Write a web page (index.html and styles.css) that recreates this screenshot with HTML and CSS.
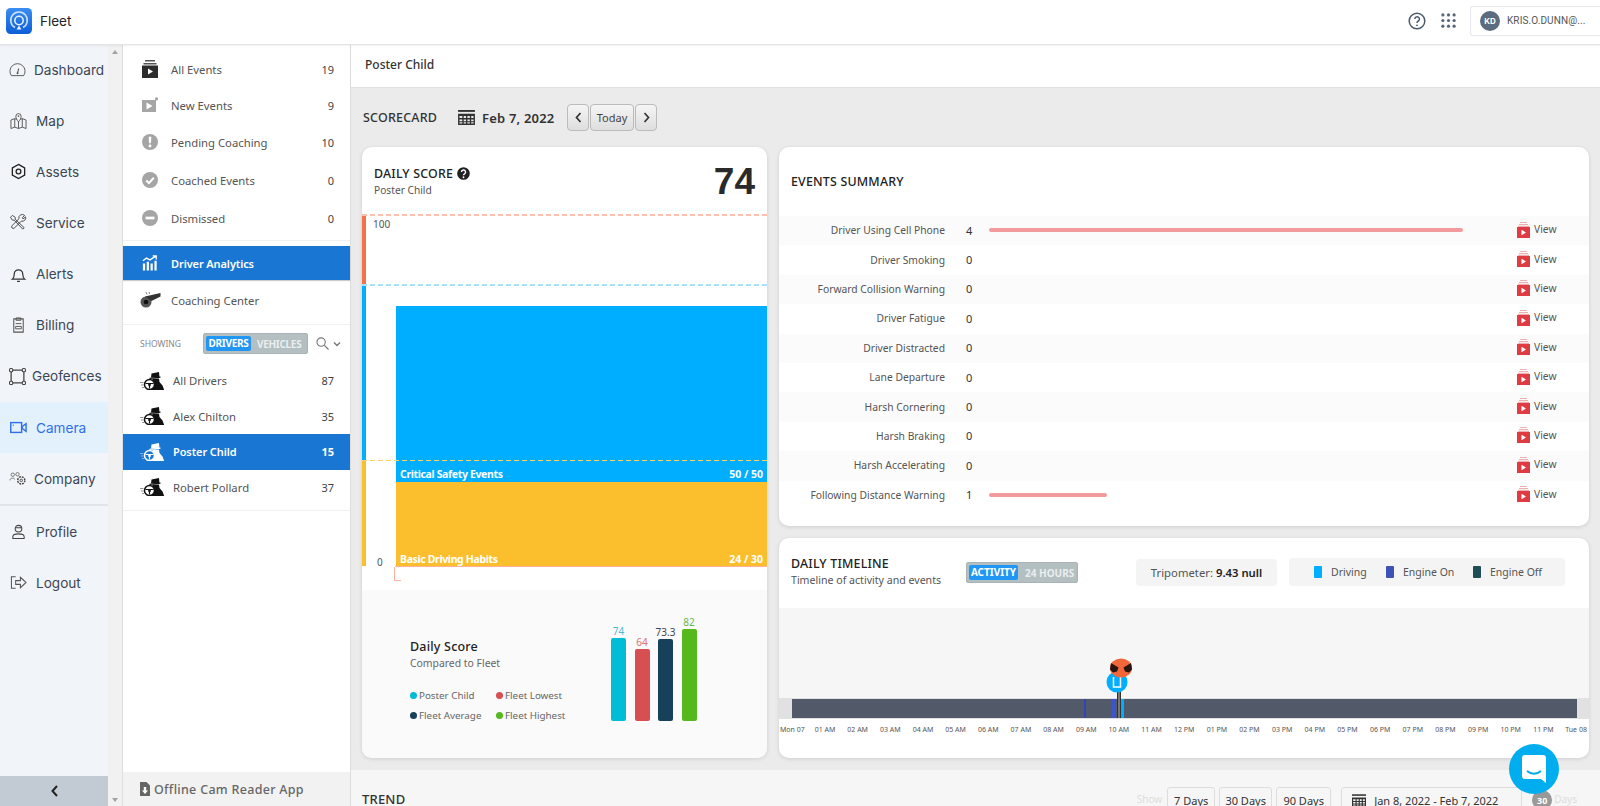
FILE: index.html
```html
<!DOCTYPE html>
<html lang="en">
<head>
<meta charset="utf-8">
<title>Fleet</title>
<link rel="stylesheet" href="styles.css">
</head>
<body>
<svg class="defs" width="0" height="0">
  <symbol id="i-driver" viewBox="0 0 24 18">
    <path d="M11.500 1.500L19 0l.5 5.500H11z" fill="currentColor"/>
    <path d="M9.500 5.800l11-1.300v1.300l-11 1.200z" fill="currentColor"/>
    <path d="M12.500 6.500h6.500l.5 3.500 3 3.500 1.500 4v.5H11z" fill="currentColor"/>
    <circle cx="9.500" cy="12.500" r="5" fill="var(--wheel,#fff)" stroke="currentColor" stroke-width="1.500"/>
    <circle cx="9.500" cy="12.800" r="1.400" fill="currentColor"/>
    <path d="M5.500 11.500h8M9.500 13v3.500" stroke="currentColor" stroke-width="1.200"/>
    <path d="M0 10.500h3.500M1 13h2.500M2 15.500h2" stroke="currentColor" stroke-width="1" opacity=".45"/>
  </symbol>
  <symbol id="i-view" viewBox="0 0 13 16">
    <path d="M3 0h7v1H3zM2 2h9v1H2zM1 3.800h11v1.200H1z" fill="#eab0b2"/>
    <rect y="5" width="13" height="11" fill="#de3c42"/>
    <path d="M4.500 7.800l4.500 2.700-4.500 2.700z" fill="#fff"/>
  </symbol>
  <symbol id="i-cal" viewBox="0 0 18 16">
    <path d="M0 0h18v2H0z" fill="#333"/>
    <path d="M0 4h18v12H0zM1.500 6.500v2h3v-2zM6 6.500v2h2.500v-2zM10 6.500v2h2.500v-2zM14 6.500v2h2.500v-2zM1.500 10v2h3v-2zM6 10v2h2.500v-2zM10 10v2h2.500v-2zM14 10v2h2.500v-2zM1.500 13v1.500h3V13zM6 13v1.500h2.500V13zM10 13v1.500h2.500V13zM14 13v1.500h2.500V13z" fill="#333" fill-rule="evenodd"/>
  </symbol>
</svg>

<header class="topbar">
  <div class="brand">
    <svg class="logo" viewBox="0 0 26 26">
      <defs><linearGradient id="lg" x1="0" y1="0" x2="0" y2="1"><stop offset="0" stop-color="#3b8df0"/><stop offset="1" stop-color="#0b5ed7"/></linearGradient></defs>
      <rect width="26" height="26" rx="4.500" fill="url(#lg)"/>
      <path d="M9 19.500a8.300 8.300 0 1 1 8 0" fill="none" stroke="#cfe3fb" stroke-width="1.500"/>
      <circle cx="13" cy="12.500" r="4.200" fill="none" stroke="#e6f1fe" stroke-width="1.600"/>
      <path d="M13 17.500l2.500 4h-5z" fill="#e6f1fe"/>
    </svg>
    <span class="brand-name">Fleet</span>
  </div>
  <div class="top-actions">
    <svg class="top-help" viewBox="0 0 18 18"><circle cx="9" cy="9" r="7.800" fill="none" stroke="#4b5b6e" stroke-width="1.500"/><path d="M6.800 7a2.300 2.300 0 1 1 3.500 2c-.9.500-1.300 1-1.300 2" fill="none" stroke="#4b5b6e" stroke-width="1.500"/><circle cx="9" cy="13.300" r=".9" fill="#4b5b6e"/></svg>
    <svg class="top-grid" viewBox="0 0 16 16" fill="#55657a"><circle cx="2" cy="2" r="1.700"/><circle cx="8" cy="2" r="1.700"/><circle cx="14" cy="2" r="1.700"/><circle cx="2" cy="8" r="1.700"/><circle cx="8" cy="8" r="1.700"/><circle cx="14" cy="8" r="1.700"/><circle cx="2" cy="14" r="1.700"/><circle cx="8" cy="14" r="1.700"/><circle cx="14" cy="14" r="1.700"/></svg>
    <div class="user-box"><span class="avatar">KD</span><span class="user-name">KRIS.O.DUNN@...</span></div>
  </div>
</header>

<div class="app">
  <nav class="nav">
    <div class="nav-list nav-list-top">
      <a class="nav-item"><svg class="nav-ic nav-ic-gauge" viewBox="0 0 18 16"><path d="M2.500 14.500a8 8 0 1 1 13 0z" fill="none" stroke="#555" stroke-width="1"/><path d="M9 12l1.200-5" stroke="#555" stroke-width="1.200"/><circle cx="9" cy="12" r="1" fill="#555"/></svg><span class="nav-label-tight">Dashboard</span></a>
      <a class="nav-item"><svg class="nav-ic" viewBox="0 0 18 18"><path d="M1 8.500l4-1.500v9l-4 1.500zM5 7l2 .8M11 7.800l2-.8 4 1.500v9l-4-1.500-4 1.500-4-1.500M13 7v9M9 10v7.500" fill="none" stroke="#555" stroke-width="1"/><path d="M9 10.500C7.500 8.500 6.200 6.800 6.200 4.500a2.800 2.800 0 0 1 5.600 0c0 2.300-1.300 4-2.800 6z" fill="none" stroke="#555"/><circle cx="9" cy="4.300" r=".9" fill="#555"/></svg><span>Map</span></a>
      <a class="nav-item"><svg class="nav-ic" viewBox="0 0 18 18"><path d="M9 1.500l6.500 3.700v7.600L9 16.500l-6.500-3.700V5.200z" fill="none" stroke="#222" stroke-width="1.400"/><circle cx="9" cy="9" r="2.500" fill="none" stroke="#222" stroke-width="1.400"/></svg><span>Assets</span></a>
      <a class="nav-item"><svg class="nav-ic" viewBox="0 0 18 18"><path d="M2.500 1.500l3 2v2l9.500 9-1.500 1.500-9-9.500h-2l-2-3zM15.500 1.500l-2.500 2.500.8 1.200 2.700-2.200a3.600 3.600 0 0 1-4.500 4.500L4.500 15a1.800 1.800 0 0 1-2.500-2.500L9.500 5a3.600 3.600 0 0 1 6-3.500z" fill="none" stroke="#444" stroke-width="1"/></svg><span>Service</span></a>
      <a class="nav-item"><svg class="nav-ic" viewBox="0 0 18 18"><path d="M2.500 14c1.300-1 2-2.500 2-5.500a4.500 4.500 0 0 1 9 0c0 3 .7 4.500 2 5.500z" fill="none" stroke="#333" stroke-width="1.300"/><path d="M7.500 16.300h3" stroke="#333" stroke-width="1.300"/></svg><span>Alerts</span></a>
      <a class="nav-item"><svg class="nav-ic" viewBox="0 0 18 18"><path d="M4 2h10v14H4z" fill="none" stroke="#555" stroke-width="1.100"/><path d="M6.500 1h5v2.500h-5zM6 7h6M6 10h6v2.500H6z" fill="none" stroke="#555"/></svg><span>Billing</span></a>
      <a class="nav-item nav-item-geo"><svg class="nav-ic" viewBox="0 0 16 16"><path d="M2 2h12v12H2z" fill="none" stroke="#444" stroke-width="1.200"/><rect x=".5" y=".5" width="3" height="3" rx="1" fill="#f1f5f9" stroke="#444"/><rect x="12.500" y=".5" width="3" height="3" rx="1" fill="#f1f5f9" stroke="#444"/><rect x=".5" y="12.500" width="3" height="3" rx="1" fill="#f1f5f9" stroke="#444"/><rect x="12.500" y="12.500" width="3" height="3" rx="1" fill="#f1f5f9" stroke="#444"/></svg><span>Geofences</span></a>
      <a class="nav-item is-active"><svg class="nav-ic" viewBox="0 0 18 14"><rect x=".8" y="1.800" width="11.500" height="10.400" fill="none" stroke="#2f6fed" stroke-width="1.500"/><path d="M13 6l4-3v8l-4-3z" fill="none" stroke="#2f6fed" stroke-width="1.500"/><circle cx="3.500" cy="4.500" r=".7" fill="#2f6fed"/></svg><span>Camera</span></a>
      <a class="nav-item"><svg class="nav-ic nav-ic-wide" viewBox="0 0 18 14"><circle cx="4" cy="3" r="1.800" fill="none" stroke="#666" stroke-width=".9"/><path d="M1 9c0-3 5-3 5-1" fill="none" stroke="#666" stroke-width=".9"/><circle cx="9" cy="2.500" r="1.800" fill="none" stroke="#666" stroke-width=".9"/><circle cx="13" cy="9" r="3.800" fill="none" stroke="#444" stroke-width="1.500" stroke-dasharray="2 1"/><circle cx="13" cy="9" r="1.300" fill="none" stroke="#444"/></svg><span class="nav-label-tight">Company</span></a>
    </div>
    <div class="nav-divider"></div>
    <div class="nav-list">
      <a class="nav-item"><svg class="nav-ic" viewBox="0 0 18 18"><circle cx="9" cy="6" r="3.500" fill="none" stroke="#444" stroke-width="1.100"/><path d="M5.500 5h7M3 16.500v-2c0-2 2-3 6-3s6 1 6 3v2z" fill="none" stroke="#444" stroke-width="1.100"/></svg><span>Profile</span></a>
      <a class="nav-item"><svg class="nav-ic" viewBox="0 0 18 16"><path d="M6 2H1.500v12H6" fill="none" stroke="#555" stroke-width="1.100"/><path d="M6 6h5V2.500L17 8l-6 5.500V10H6z" fill="none" stroke="#555" stroke-width="1.100"/></svg><span>Logout</span></a>
    </div>
    <div class="nav-collapse"><svg width="7" height="12" viewBox="0 0 7 12"><path d="M6 1L1.500 6 6 11" fill="none" stroke="#222" stroke-width="2"/></svg></div>
  </nav>
  <div class="nav-scroll"><span class="arrow-up"></span><span class="arrow-down"></span></div>

  <aside class="side">
    <ul class="side-list side-events">
      <li class="side-row"><svg class="side-ic" viewBox="0 0 16 18"><path d="M3 0h10v1.500H3zM1.500 3h13v1.500h-13z" fill="#555"/><rect y="5.500" width="16" height="12.500" fill="#2c2c2c"/><path d="M6 8.500l5 3-5 3z" fill="#fff"/></svg><span class="side-name">All Events</span><span class="side-num">19</span></li>
      <li class="side-row"><svg class="side-ic" viewBox="0 0 16 16"><rect y="3" width="14" height="12" fill="#a5a5a5"/><path d="M4.500 5.500l6 3.500-6 3.500z" fill="#fff"/><circle cx="14.500" cy="1.800" r="1.600" fill="#a5a5a5"/></svg><span class="side-name">New Events</span><span class="side-num">9</span></li>
      <li class="side-row side-row-pending"><svg class="side-ic" viewBox="0 0 18 18"><circle cx="9" cy="9" r="9" fill="#a5a5a5"/><path d="M7.500 3h3l-.5 7.500H8z" fill="#fff"/><circle cx="9" cy="13.500" r="1.600" fill="#fff"/></svg><span class="side-name">Pending Coaching</span><span class="side-num">10</span></li>
      <li class="side-row side-row-coached"><svg class="side-ic" viewBox="0 0 18 18"><circle cx="9" cy="9" r="9" fill="#a5a5a5"/><path d="M4.800 9.500l3 3 5.500-6" fill="none" stroke="#fff" stroke-width="2.300"/></svg><span class="side-name">Coached Events</span><span class="side-num">0</span></li>
      <li class="side-row side-row-coached"><svg class="side-ic" viewBox="0 0 18 18"><circle cx="9" cy="9" r="9" fill="#a5a5a5"/><rect x="4" y="7.500" width="10" height="3" fill="#fff"/></svg><span class="side-name">Dismissed</span><span class="side-num">0</span></li>
    </ul>
    <div class="side-tabs">
      <div class="side-row side-row-active side-row-tab"><svg class="side-ic" viewBox="0 0 18 17" fill="#fff"><path d="M1 9h2.500v8H1zM5.300 7h2.500v10H5.300zM9.600 9h2.500v8H9.600zM14 6h2.500v11H14z"/><path d="M1 6l4-3 4 2 6-4M12 .5h4v4" fill="none" stroke="#fff" stroke-width="1.500"/></svg><span class="side-name side-name-strong">Driver Analytics</span></div>
      <div class="side-row side-row-tab"><svg class="side-ic side-ic-whistle" viewBox="0 0 22 16"><circle cx="7" cy="10" r="5.500" fill="#555"/><circle cx="7" cy="10" r="2.300" fill="#111"/><path d="M6 4.600L21.500 1v3.500l-9 4.500z" fill="#333"/><path d="M7 0l1 2.500M10 0l.5 2" stroke="#888"/></svg><span class="side-name">Coaching Center</span></div>
    </div>
    <div class="side-filter">
      <span class="showing">SHOWING</span>
      <div class="switch switch-side"><span class="switch-on">DRIVERS</span><span class="switch-off">VEHICLES</span></div>
      <svg class="filter-search" viewBox="0 0 14 14"><circle cx="5.500" cy="5.500" r="4.500" fill="none" stroke="#777" stroke-width="1.200"/><path d="M9 9l4.500 4.500" stroke="#777" stroke-width="1.300"/></svg>
      <svg class="filter-chev" viewBox="0 0 8 6"><path d="M1 1.500l3 3 3-3" fill="none" stroke="#777" stroke-width="1.400"/></svg>
    </div>
    <ul class="side-list drivers">
      <li class="driver"><svg class="driver-ic"><use href="#i-driver"/></svg><span class="side-name">All Drivers</span><span class="side-num">87</span></li>
      <li class="driver"><svg class="driver-ic"><use href="#i-driver"/></svg><span class="side-name">Alex Chilton</span><span class="side-num">35</span></li>
      <li class="driver driver-active"><svg class="driver-ic"><use href="#i-driver"/></svg><span class="side-name side-name-strong">Poster Child</span><span class="side-num">15</span></li>
      <li class="driver"><svg class="driver-ic"><use href="#i-driver"/></svg><span class="side-name">Robert Pollard</span><span class="side-num">37</span></li>
    </ul>
    <div class="side-footer"><svg class="footer-ic" viewBox="0 0 10 14"><path d="M0 0h6.500L10 3.500V14H0z" fill="#666"/><path d="M3.800 5h2.400v3.500H8L5 12 2 8.500h1.800z" fill="#fff"/></svg><span>Offline Cam Reader App</span></div>
  </aside>

  <main class="main">
    <div class="page-title">Poster Child</div>
    <section class="score-section">
      <div class="score-head">
        <span class="section-label">SCORECARD</span>
        <svg class="cal-ic"><use href="#i-cal"/></svg>
        <span class="score-date">Feb 7, 2022</span>
        <div class="pager">
          <button class="pg pg-arrow"><svg width="7" height="11" viewBox="0 0 7 11"><path d="M5.500 1L1.500 5.500l4 4.500" fill="none" stroke="#333" stroke-width="1.700"/></svg></button>
          <button class="pg pg-today">Today</button>
          <button class="pg pg-arrow"><svg width="7" height="11" viewBox="0 0 7 11"><path d="M1.500 1l4 4.500-4 4.500" fill="none" stroke="#333" stroke-width="1.700"/></svg></button>
        </div>
      </div>
      <div class="score-grid">
        <article class="card score-card">
          <div class="score-top">
            <div>
              <div class="card-title">DAILY SCORE <svg class="q-ic" viewBox="0 0 14 14"><circle cx="7" cy="7" r="6.800" fill="#222"/><path d="M4.800 5.400a2.200 2.200 0 1 1 3.300 1.900c-.8.400-1.100.8-1.100 1.700" fill="none" stroke="#fff" stroke-width="1.500"/><circle cx="7" cy="11" r="1" fill="#fff"/></svg></div>
              <div class="card-sub">Poster Child</div>
            </div>
            <div class="score-big">74</div>
          </div>
          <div class="chart">
            <div class="axis"><span class="axis-red"></span><span class="axis-blue"></span><span class="axis-yellow"></span></div>
            <div class="stack">
              <div class="stack-blue"><span>Critical Safety Events</span><span>50 / 50</span></div>
              <div class="stack-yellow"><span>Basic Driving Habits</span><span>24 / 30</span></div>
            </div>
            <i class="dash dash-red"></i><i class="dash dash-blue"></i><i class="dash dash-yellow"></i>
            <span class="tick-100">100</span><span class="tick-0">0</span>
            <i class="base-line"></i><i class="bracket"></i>
          </div>
          <div class="compare">
            <div class="compare-text">
              <div class="compare-title">Daily Score</div>
              <div class="compare-sub">Compared to Fleet</div>
              <div class="compare-legend">
                <span class="leg"><i class="dot c-teal"></i>Poster Child</span>
                <span class="leg"><i class="dot c-red"></i>Fleet Lowest</span>
                <span class="leg"><i class="dot c-navy"></i>Fleet Average</span>
                <span class="leg"><i class="dot c-green"></i>Fleet Highest</span>
              </div>
            </div>
            <div class="mini-bars">
              <div class="mini"><span class="t-teal">74</span><i class="c-teal" style="height:83px"></i></div>
              <div class="mini"><span class="t-red">64</span><i class="c-red" style="height:72px"></i></div>
              <div class="mini"><span class="t-navy">73.3</span><i class="c-navy" style="height:82px"></i></div>
              <div class="mini"><span class="t-green">82</span><i class="c-green" style="height:92px"></i></div>
            </div>
          </div>
        </article>

        <div class="right-col">
          <article class="card events-card">
            <h2 class="card-title events-title">EVENTS SUMMARY</h2>
            <div class="ev-list">
              <div class="ev-row"><span class="ev-name">Driver Using Cell Phone</span><span class="ev-num">4</span><span class="ev-track"><i class="ev-bar" style="width:474px"></i></span><span class="ev-view"><svg class="view-ic"><use href="#i-view"/></svg>View</span></div>
              <div class="ev-row"><span class="ev-name">Driver Smoking</span><span class="ev-num">0</span><span class="ev-track"></span><span class="ev-view"><svg class="view-ic"><use href="#i-view"/></svg>View</span></div>
              <div class="ev-row"><span class="ev-name">Forward Collision Warning</span><span class="ev-num">0</span><span class="ev-track"></span><span class="ev-view"><svg class="view-ic"><use href="#i-view"/></svg>View</span></div>
              <div class="ev-row"><span class="ev-name">Driver Fatigue</span><span class="ev-num">0</span><span class="ev-track"></span><span class="ev-view"><svg class="view-ic"><use href="#i-view"/></svg>View</span></div>
              <div class="ev-row"><span class="ev-name">Driver Distracted</span><span class="ev-num">0</span><span class="ev-track"></span><span class="ev-view"><svg class="view-ic"><use href="#i-view"/></svg>View</span></div>
              <div class="ev-row"><span class="ev-name">Lane Departure</span><span class="ev-num">0</span><span class="ev-track"></span><span class="ev-view"><svg class="view-ic"><use href="#i-view"/></svg>View</span></div>
              <div class="ev-row"><span class="ev-name">Harsh Cornering</span><span class="ev-num">0</span><span class="ev-track"></span><span class="ev-view"><svg class="view-ic"><use href="#i-view"/></svg>View</span></div>
              <div class="ev-row"><span class="ev-name">Harsh Braking</span><span class="ev-num">0</span><span class="ev-track"></span><span class="ev-view"><svg class="view-ic"><use href="#i-view"/></svg>View</span></div>
              <div class="ev-row"><span class="ev-name">Harsh Accelerating</span><span class="ev-num">0</span><span class="ev-track"></span><span class="ev-view"><svg class="view-ic"><use href="#i-view"/></svg>View</span></div>
              <div class="ev-row"><span class="ev-name">Following Distance Warning</span><span class="ev-num">1</span><span class="ev-track"><i class="ev-bar" style="width:118px"></i></span><span class="ev-view"><svg class="view-ic"><use href="#i-view"/></svg>View</span></div>
            </div>
          </article>

          <article class="card timeline-card">
            <div class="tl-head">
              <div class="tl-heading">
                <div class="card-title">DAILY TIMELINE</div>
                <div class="card-sub card-sub-wide">Timeline of activity and events</div>
              </div>
              <div class="switch switch-tl"><span class="switch-on">ACTIVITY</span><span class="switch-off">24 HOURS</span></div>
              <div class="tripo">Tripometer: <b>9.43 null</b></div>
              <div class="tl-legend">
                <span class="tl-leg tl-leg-a"><i class="swatch s-drive"></i>Driving</span>
                <span class="tl-leg tl-leg-b"><i class="swatch s-on"></i>Engine On</span>
                <span class="tl-leg"><i class="swatch s-off"></i>Engine Off</span>
              </div>
            </div>
            <div class="tl-canvas">
              <div class="tl-band">
                <div class="tl-bar">
                  <i class="seg seg-a"></i><i class="seg seg-b"></i><i class="seg seg-c"></i><i class="seg seg-d"></i>
                </div>
              </div>
              <svg class="pin" viewBox="0 0 28 69">
                <path d="M12 40h4v29h-4z" fill="#333"/><path d="M13.500 40h1v29h-1z" fill="#bbb"/>
                <circle cx="12" cy="33" r="10.500" fill="#00aeff"/>
                <path d="M8.500 28v10h7V28" fill="none" stroke="#fff" stroke-width="1.500"/>
                <ellipse cx="16" cy="19" rx="11" ry="9.500" fill="#f2673a"/>
                <path d="M6 14l7.500 4.500-1.500 4-4 1-3-3zM26 14l-7.500 4.500 1.500 4 4 1 3-3z" fill="#2a1410"/>
              </svg>
            </div>
            <div class="tl-ticks">
              <span>Mon 07</span><span>01 AM</span><span>02 AM</span><span>03 AM</span><span>04 AM</span><span>05 AM</span><span>06 AM</span><span>07 AM</span><span>08 AM</span><span>09 AM</span><span>10 AM</span><span>11 AM</span><span>12 PM</span><span>01 PM</span><span>02 PM</span><span>03 PM</span><span>04 PM</span><span>05 PM</span><span>06 PM</span><span>07 PM</span><span>08 PM</span><span>09 PM</span><span>10 PM</span><span>11 PM</span><span>Tue 08</span>
            </div>
          </article>
        </div>
      </div>
    </section>
    <section class="trend">
      <span class="section-label">TREND</span>
      <div class="trend-tools">
        <span class="trend-show">Show</span>
        <button class="range range-7">7 Days</button>
        <button class="range range-30">30 Days</button>
        <button class="range range-90">90 Days</button>
        <div class="range range-date"><svg class="cal-small"><use href="#i-cal"/></svg>Jan 8, 2022 - Feb 7, 2022</div>
        <span class="range-count">30</span>
        <span class="trend-show">Days</span>
      </div>
    </section>
  </main>
</div>
<div class="chat"><svg width="24" height="28" viewBox="0 0 24 28"><path d="M3 0h18a3 3 0 0 1 3 3v25l-5-4H3a3 3 0 0 1-3-3V3a3 3 0 0 1 3-3z" fill="#fff"/><path d="M5 16c4 3.500 10 3.500 14 0" fill="none" stroke="#00aeef" stroke-width="2"/></svg></div>
</body>
</html>
```
FILE: styles.css
```css
* { box-sizing: border-box; }
html, body { margin: 0; height: 806px; overflow: hidden; }
body { display: flex; flex-direction: column; font-family: "Noto Sans", "Open Sans", sans-serif; color: #333; background: #fff; position: relative; }
.defs { position: absolute; }
ul { list-style: none; margin: 0; padding: 0; }
button { font-family: inherit; padding: 0; }
svg { display: block; flex: none; }

.topbar { height: 45px; flex: none; display: flex; align-items: center; justify-content: space-between; background: #fff; border-bottom: 1px solid #e4e4e4; box-shadow: 0 1px 2px rgba(0,0,0,.06); position: relative; z-index: 2; padding-left: 6px; }
.brand { display: flex; align-items: center; gap: 8px; margin-top: -3px; }
.logo { width: 26px; height: 26px; }
.brand-name { font-family: Inter, sans-serif; font-size: 13.500px; color: #222; }
.top-actions { display: flex; align-items: center; margin-top: -3px; }
.top-help { width: 18px; height: 18px; margin-right: 15px; }
.top-grid { width: 15px; height: 15px; margin-right: 14px; }
.user-box { width: 130px; height: 30px; border: 1px solid #e6e9ee; border-right: 0; border-radius: 3px 0 0 3px; display: flex; align-items: center; padding-left: 9px; gap: 7px; }
.avatar { width: 20px; height: 20px; border-radius: 50%; background: #5b6b80; color: #fff; font: 700 8px Inter, sans-serif; display: flex; align-items: center; justify-content: center; }
.user-name { font: 10px Roboto, sans-serif; color: #555; letter-spacing: .1px; }

.app { flex: 1; display: flex; min-height: 0; }
.nav { width: 108px; flex: none; background: #f1f5f9; display: flex; flex-direction: column; font-family: Inter, sans-serif; font-size: 13.600px; color: #3d4654; }
.nav-list-top { margin-top: -1px; }
.nav-item { height: 51.150px; display: flex; align-items: center; gap: 9px; padding-left: 10px; }
.nav-ic { width: 17px; height: 17px; }
.nav-ic-gauge { width: 17px; margin-left: -1px; margin-right: -1px; }
.nav-ic-wide { margin-left: -1px; margin-right: -1px; }
.nav-label-tight { margin-left: 0; }
.nav-item-geo { gap: 6px; padding-left: 9px; }
.is-active { background: #e3f1fd; color: #2f6fed; }
.nav-divider { height: 2px; background: #e1e5ea; }
.nav-collapse { margin-top: auto; height: 30px; background: #c2cbd3; display: flex; align-items: center; justify-content: center; }

.nav-scroll { width: 15px; flex: none; background: #f1f1f1; border-right: 1px solid #dedede; position: relative; }
.arrow-up, .arrow-down { position: absolute; left: 4px; width: 0; height: 0; border-left: 3px solid transparent; border-right: 3px solid transparent; }
.arrow-up { top: 5px; border-bottom: 4px solid #a3a3a3; }
.arrow-down { bottom: 4px; border-top: 4px solid #a3a3a3; }

.side { width: 228px; flex: none; background: #fff; border-right: 1px solid #dcdcdc; display: flex; flex-direction: column; font-size: 11.300px; color: #555; }
.side-events { padding-top: 6px; padding-bottom: 3px; border-bottom: 1px solid #f1f1f1; }
.side-row { height: 36px; display: flex; align-items: center; padding: 0 16px 0 19px; }
.side-row-pending { height: 38px; }
.side-row-coached { height: 38px; }
.side-ic { width: 16px; height: 18px; margin-right: 13px; }
.side-ic-whistle { width: 22px; margin: 0 10px 0 -3px; }
.side-name { flex: 1; }
.side-name-strong { font-weight: 600; font-size: 11px; letter-spacing: -.1px; }
.side-num { color: #444; font-size: 11px; }
.side-tabs { padding-top: 5px; border-bottom: 1px solid #f1f1f1; padding-bottom: 4px; }
.side-row-tab { height: 34px; }
.side-row-tab + .side-row-tab { height: 40px; }
.side-row-active { background: #1976d2; color: #fff; box-shadow: 0 1px 1px rgba(0,0,0,.2); }
.side-filter { height: 37px; display: flex; align-items: center; padding-left: 17px; }
.showing { font-size: 8.500px; color: #888; width: 63px; }
.switch { display: flex; align-items: center; background: #b4bfc2; border-radius: 2px; font-weight: 700; color: #e9eeee; border: 1px solid #a9b3b6; padding: 2px; }
.switch-on { background: #2196f3; color: #fff; border-radius: 2px; }
.switch-side { width: 105px; height: 21px; font-size: 10px; letter-spacing: -.3px; }
.switch-side .switch-on { width: 45px; height: 15px; line-height: 15px; text-align: center; }
.switch-side .switch-off { margin-left: 6px; }
.filter-search { width: 13px; height: 13px; margin-left: 8px; }
.filter-chev { width: 8px; height: 6px; margin-left: 4px; }
.drivers { border-bottom: 1px solid #f1f1f1; padding: 1px 0 5px; }
.driver { height: 35.500px; display: flex; align-items: center; padding: 0 16px 0 17px; }
.driver-ic { width: 24px; height: 18px; margin-right: 9px; color: #111; --wheel: #fff; }
.driver-active { background: #1976d2; color: #fff; }
.driver-active .driver-ic { color: #fff; --wheel: #1976d2; }
.driver-active .side-num { color: #fff; font-weight: 700; }
.side-footer { margin-top: auto; height: 34px; background: #f2f2f2; display: flex; align-items: center; padding-left: 17px; gap: 4px; font-size: 12.500px; color: #666; font-weight: 500; letter-spacing: .3px; }
.footer-ic { width: 10px; height: 14px; }

.main { flex: 1; min-width: 0; display: flex; flex-direction: column; background: #f6f6f6; }
.page-title { height: 43px; flex: none; background: #fff; border-bottom: 1px solid #e2e2e2; font-size: 12px; font-weight: 500; color: #333; padding: 0 0 3px 14px; display: flex; align-items: center; }
.score-section { height: 682px; flex: none; background: #ebebeb; padding: 0 11px 0 11px; }
.score-head { height: 59px; display: flex; align-items: center; }
.section-label { font-size: 12.500px; font-weight: 500; color: #333; letter-spacing: .2px; }
.score-head .section-label { width: 95px; margin-left: 1px; }
.cal-ic { width: 17px; height: 15px; margin-right: 7px; }
.score-date { font-size: 13px; font-weight: 600; color: #333; width: 85px; letter-spacing: .2px; }
.pager { display: flex; gap: 1px; }
.pg { height: 27px; border: 1px solid #bbb; border-radius: 4px; background: linear-gradient(#f5f5f5, #dedede); font-size: 11px; color: #444; display: flex; align-items: center; justify-content: center; }
.pg-arrow { width: 22px; }
.pg-today { width: 44px; }

.score-grid { display: grid; grid-template-columns: 405px 810px; gap: 12px; height: 611px; }
.card { background: #fff; border-radius: 10px; box-shadow: 0 1px 4px rgba(0,0,0,.12); overflow: hidden; }
.score-card { display: flex; flex-direction: column; }
.score-top { height: 68px; display: flex; justify-content: space-between; padding: 18px 12px 0 12px; }
.card-title { font-size: 12.400px; font-weight: 500; color: #222; letter-spacing: .2px; display: flex; align-items: center; gap: 4px; margin: 0; }
.q-ic { width: 13px; height: 13px; }
.card-sub { font-size: 10.200px; color: #555; margin-top: 1px; }
.card-sub-wide { font-size: 10.600px; }
.score-big { font: 700 37px/38px "Liberation Sans", sans-serif; color: #2a2a2a; margin-top: -2px; }

.chart { height: 353px; display: flex; position: relative; flex: none; }
.axis { width: 4px; display: flex; flex-direction: column; }
.axis-red { height: 70px; background: #f4714a; }
.axis-blue { height: 176px; background: #00aeff; }
.axis-yellow { height: 105px; background: #fbbf2d; }
.stack { flex: 1; margin-left: 30px; padding-top: 91px; font-size: 10.500px; font-weight: 700; color: #fff; }
.stack-blue, .stack-yellow { display: flex; justify-content: space-between; align-items: flex-end; padding: 0 4px 0 4px; }
.stack-blue { height: 176px; background: #00aeff; padding-bottom: 1px; }
.stack-yellow { height: 84px; background: #fbbf2d; }
.stack span:first-child { letter-spacing: -.35px; }
.dash { position: absolute; left: 0; right: 0; height: 2px; }
.dash-red { top: -1px; background: repeating-linear-gradient(90deg, #ffbfae 0 5px, transparent 5px 8px); }
.dash-blue { top: 69px; background: repeating-linear-gradient(90deg, #a5e0ff 0 5px, transparent 5px 8px); }
.dash-yellow { top: 245px; height: 1px; background: repeating-linear-gradient(90deg, #fcd36a 0 5px, transparent 5px 8px); }
.tick-100 { position: absolute; left: 11px; top: 2px; font-size: 10px; color: #555; }
.tick-0 { position: absolute; left: 15px; top: 340px; font-size: 10px; color: #555; }
.base-line { position: absolute; left: 33px; right: 0; top: 351px; height: 1px; background: #ffb09b; }
.bracket { position: absolute; left: 32px; top: 352px; width: 7px; height: 14px; border-left: 1px solid #ffb09b; border-bottom: 1px solid #ffb09b; }

.compare { margin-top: 22px; flex: 1; background: #fafafa; display: flex; }
.compare-text { width: 248px; padding: 48px 0 0 48px; }
.compare-title { font-size: 12.500px; font-weight: 500; color: #222; letter-spacing: .2px; }
.compare-sub { font-size: 10.400px; color: #666; margin-top: 1px; }
.compare-legend { display: grid; grid-template-columns: 86px 90px; row-gap: 6px; margin-top: 18px; font-size: 9.800px; color: #666; width: 200px; }
.leg { display: flex; align-items: center; gap: 2px; height: 14px; white-space: nowrap; }
.dot { width: 7px; height: 7px; border-radius: 50%; }
.c-teal { background: #00bcd4; }
.c-red { background: #d84f52; }
.c-navy { background: #17405b; }
.c-green { background: #55b81c; }
.mini-bars { margin-left: 1px; height: 131px; display: flex; gap: 8.500px; align-items: flex-end; }
.mini { width: 15px; display: flex; flex-direction: column; align-items: center; font-size: 10px; }
.mini span { white-space: nowrap; line-height: 13px; }
.mini i { width: 15px; border-radius: 2px; display: block; }
.t-teal { color: #4fb9d0; }
.t-red { color: #dd7075; }
.t-navy { color: #445; }
.t-green { color: #66b84a; }

.right-col { display: flex; flex-direction: column; gap: 12px; min-height: 0; }
.events-card { height: 379px; flex: none; }
.events-title { padding: 26px 0 0 12px; height: 69px; align-items: flex-start; }
.ev-row { height: 29.400px; display: flex; align-items: center; font-size: 10.300px; color: #555; padding-bottom: 1px; }
.ev-row:nth-child(odd) { background: #fbfbfb; }
.ev-name { width: 166px; text-align: right; white-space: nowrap; }
.ev-num { margin-left: 21px; width: 23px; color: #333; font-size: 11px; }
.ev-track { width: 528px; }
.ev-bar { display: block; height: 4px; background: #f39a9c; border-radius: 2px; }
.ev-view { display: flex; align-items: center; gap: 4px; margin-top: -2px; }
.view-ic { width: 13px; height: 16px; margin-top: 1px; }

.timeline-card { flex: 1; display: flex; flex-direction: column; position: relative; }
.tl-head { height: 70px; display: flex; align-items: flex-start; flex: none; }
.tl-heading { width: 187px; padding: 17px 0 0 12px; flex: none; }
.switch-tl { width: 112px; height: 21px; margin-top: 24px; font-size: 10px; }
.switch-tl .switch-on { width: 49px; height: 15px; line-height: 15px; text-align: center; }
.switch-tl .switch-off { margin-left: 7px; }
.tripo { width: 141px; height: 27px; margin: 21px 0 0 58px; background: #f4f4f4; border-radius: 4px; font-size: 11.300px; display: flex; align-items: center; justify-content: center; gap: 3px; color: #555; }
.tripo b { color: #222; font-weight: 600; }
.tl-legend { width: 276px; height: 28px; margin: 20px 0 0 12px; background: #f4f4f4; border-radius: 4px; font-size: 10.500px; color: #555; display: flex; align-items: center; padding-left: 25px; }
.tl-leg { display: flex; align-items: center; gap: 9px; white-space: nowrap; }
.tl-leg-a { width: 72px; }
.tl-leg-b { width: 87px; }
.swatch { width: 8px; height: 12px; border-radius: 1px; }
.s-drive { background: #00aeff; }
.s-on { background: #3f51b5; }
.s-off { background: #1f4d57; }
.tl-canvas { height: 111px; flex: none; background: #f6f6f6; position: relative; display: flex; flex-direction: column; justify-content: flex-end; }
.tl-band { height: 21px; background: #e1e1e1; padding: 1px 12px 1px 13px; }
.tl-bar { height: 19px; background: #525a6a; position: relative; }
.seg { position: absolute; top: 0; bottom: 0; }
.seg-a { left: 292px; width: 2px; background: #3344bb; }
.seg-b { left: 320px; width: 4px; background: #3b55cc; }
.seg-c { left: 326px; width: 1px; background: #00aeff; }
.seg-d { left: 329px; width: 3px; background: #00aeff; }
.pin { position: absolute; left: 326px; top: 41px; width: 28px; height: 69px; }
.tl-ticks { display: flex; padding: 6px 0 0 0; margin-left: -3px; font-size: 7px; color: #555; }
.tl-ticks span { width: 32.670px; flex: none; text-align: center; white-space: nowrap; }

.trend { flex: 1; display: flex; justify-content: space-between; padding: 0 0 0 11px; position: relative; min-height: 0; }
.trend > .section-label { margin-top: 20px; font-size: 13px; }
.trend-tools { display: flex; gap: 2px; align-items: flex-start; padding-top: 17px; margin-right: 23px; font-size: 11px; color: #444; }
.trend-show { color: #ddd; margin-top: 5px; font-size: 10px; }
.range { height: 26px; border: 1px solid #ddd; border-radius: 3px; background: #f6f6f6; font-size: 11px; color: #333; }
.range-7 { width: 48px; margin-left: 3px; }
.range-30 { width: 53px; margin-left: 2px; }
.range-90 { width: 55px; margin-left: 2px; }
.range-date { width: 181px; margin-left: 8px; display: flex; align-items: center; gap: 8px; padding-left: 10px; background: #f6f6f6; }
.cal-small { width: 14px; height: 13px; }
.range-count { width: 20px; height: 20px; border-radius: 50%; background: #999; color: #fff; display: flex; align-items: center; justify-content: center; font-size: 9px; font-weight: 700; margin-left: 8px; margin-top: 3px; }
.chat { position: absolute; left: 1509px; top: 744px; width: 50px; height: 50px; border-radius: 50%; background: #00aeef; display: flex; align-items: center; justify-content: center; }
```
